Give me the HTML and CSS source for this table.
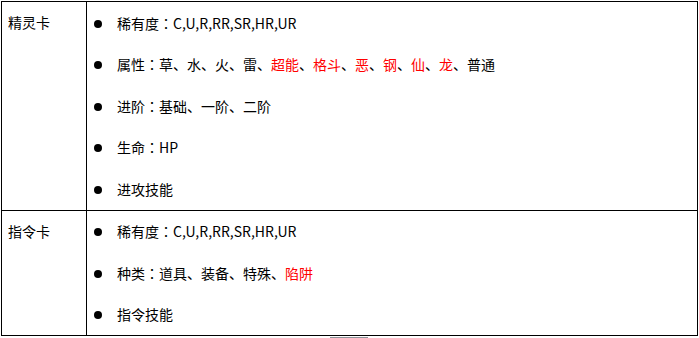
FILE: index.html
```html
<!DOCTYPE html>
<html lang="zh">
<head>
<meta charset="utf-8">
<link rel="stylesheet" href="styles.css">
</head>
<body>
<div class="card-table">
  <div class="cell name">精灵卡</div>
  <div class="cell body">
    <ul class="list">
      <li>稀有度<span class="colon">：</span>C,U,R,RR,SR,HR,UR</li>
      <li>属性<span class="colon">：</span>草、水、火、雷、<span class="red">超能</span>、<span class="red">格斗</span>、<span class="red">恶</span>、<span class="red">钢</span>、<span class="red">仙</span>、<span class="red">龙</span>、普通</li>
      <li>进阶<span class="colon">：</span>基础、一阶、二阶</li>
      <li>生命<span class="colon">：</span>HP</li>
      <li>进攻技能</li>
    </ul>
  </div>
  <div class="cell name row2">指令卡</div>
  <div class="cell body row2">
    <ul class="list">
      <li>稀有度<span class="colon">：</span>C,U,R,RR,SR,HR,UR</li>
      <li>种类<span class="colon">：</span>道具、装备、特殊、<span class="red">陷阱</span></li>
      <li>指令技能</li>
    </ul>
  </div>
</div>
<div class="scroll-thumb"></div>
</body>
</html>
```
FILE: styles.css
```css
html, body {
  margin: 0;
  padding: 0;
  background: #fff;
}
body {
  font-family: "Noto Sans CJK SC", "Noto Sans", sans-serif;
  font-size: 14px;
  color: #000;
  padding: 1px 0 0 1px;
}
.card-table {
  box-sizing: border-box;
  width: 697px;
  border: 1px solid #000;
  display: grid;
  grid-template-columns: 85px 1fr;
}
.cell {
  box-sizing: border-box;
}
.name {
  border-right: 1px solid #000;
  padding-left: 6px;
  line-height: 41.5px;
}
.row2 {
  border-top: 1px solid #000;
}
.list {
  list-style: none;
  margin: 0;
  padding: 0;
}
.list li {
  height: 41.5px;
  display: flex;
  align-items: center;
  white-space: pre;
}
.list li::before {
  content: "";
  width: 8px;
  height: 8px;
  border-radius: 50%;
  background: #000;
  margin: 2px 15px 0 7px;
  flex: none;
}
.colon {
  font-family: "Noto Sans CJK TC", "Noto Sans CJK SC", sans-serif;
}
.red {
  color: #ff0000;
}
.scroll-thumb {
  width: 38px;
  height: 1px;
  background: #8c9298;
  margin: 1px 0 0 329px;
}
```
